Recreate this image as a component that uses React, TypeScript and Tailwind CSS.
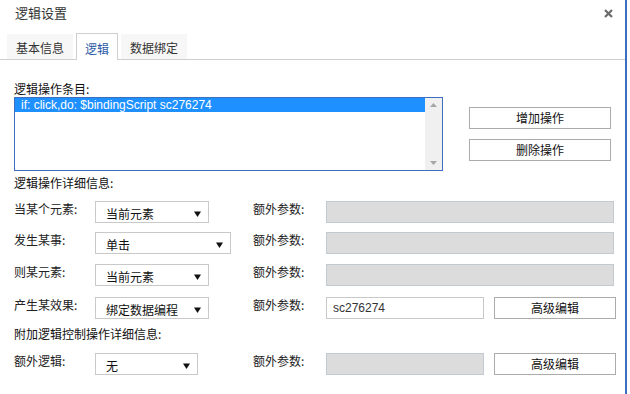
import React from 'react';

const cjk = '"Noto Sans CJK SC", "Liberation Sans", sans-serif';

const Caret: React.FC = () => (
  <svg width="7" height="6" viewBox="0 0 7 6" className="shrink-0">
    <path d="M0 0.5h7L3.5 6z" fill="#111" />
  </svg>
);

const Select: React.FC<{ value: string; width: string }> = ({ value, width }) => (
  <div className={`${width} h-[22px] border border-[#c9c9c9] bg-white flex items-center justify-between pl-[10px] pr-[7px] pt-[3px]`}>
    <span className="text-[12px] leading-[14px] text-[#111]">{value}</span>
    <Caret />
  </div>
);

const Button: React.FC<{ label: string; width: string }> = ({ label, width }) => (
  <div className={`${width} h-[22px] border border-[#ababab] bg-white flex items-center justify-center text-[12px] leading-[14px] text-[#111]`}>
    {label}
  </div>
);

const Row: React.FC<{ label: string; children: React.ReactNode; right: React.ReactNode; className?: string }> = ({ label, children, right, className }) => (
  <div className={`flex items-start h-[22px] ${className ?? ''}`}>
    <div className="w-[81px] pt-[1px] text-[12px] leading-[14px] text-[#222]">{label}</div>
    <div className="w-[158px]">{children}</div>
    <div className="w-[73px] pt-[1px] text-[12px] leading-[14px] text-[#222]">额外参数:</div>
    {right}
  </div>
);

export default function App() {
  return (
    <div className="w-[630px] h-[394px] bg-white overflow-hidden flex" style={{ fontFamily: cjk }}>
      <div className="w-[627px] h-full border-r-2 border-[#3d6fc1] flex flex-col">
        {/* header */}
        <div className="h-[33px] flex items-start justify-between pl-[15px] pr-[15px] pt-[5px]">
          <span className="text-[13px] leading-[15px] text-[#333]">逻辑设置</span>
          <svg width="9" height="9" viewBox="0 0 9 9" className="mt-[4px] mr-[-3px]">
            <path d="M1 1l7 7M8 1l-7 7" stroke="#6b6b6b" strokeWidth="2.2" />
          </svg>
        </div>

        {/* tabs */}
        <div className="h-[27px] flex items-end gap-[3px] pl-[7px] border-b border-[#cfcfcf]">
          <div className="h-[25px] px-[9px] bg-[#f7f7f7] text-[12px] leading-[14px] text-[#333] pt-[7px]">基本信息</div>
          <div className="h-[27px] px-[8px] bg-white border border-b-0 border-[#cfcfcf] mb-[-1px] text-[12px] leading-[14px] text-[#2b5aa5] pt-[8px]">逻辑</div>
          <div className="h-[25px] px-[9px] bg-[#f7f7f7] text-[12px] leading-[14px] text-[#333] pt-[7px]">数据绑定</div>
        </div>

        <div className="pl-[14px]">
          <div className="mt-[22px] text-[12px] leading-[14px] text-[#111]">逻辑操作条目:</div>

          <div className="mt-[1px] flex items-start">
            <div className="w-[429px] h-[74px] border border-[#3d6fc1] flex">
              <div className="flex-1">
                <div className="h-[14px] bg-[#1e90ff] pl-[6px] text-white text-[12px] leading-[14px]" style={{ fontFamily: '"Liberation Sans", Arial, sans-serif' }}>
                  if: click,do: $bindingScript sc276274
                </div>
              </div>
              <div className="w-[17px] h-full bg-[#f0f0f0] flex flex-col items-center justify-between py-[5px]">
                <svg width="7" height="4" viewBox="0 0 7 4"><path d="M0 4h7L3.5 0z" fill="#a6a6a6" /></svg>
                <svg width="7" height="4" viewBox="0 0 7 4"><path d="M0 0h7L3.5 4z" fill="#a6a6a6" /></svg>
              </div>
            </div>
            <div className="ml-[26px] pt-[10px] flex flex-col gap-[10px]">
              <Button label="增加操作" width="w-[142px]" />
              <Button label="删除操作" width="w-[142px]" />
            </div>
          </div>

          <div className="mt-[5px] text-[12px] leading-[14px] text-[#111]">逻辑操作详细信息:</div>

          <Row
            className="mt-[11px]"
            label="当某个元素:"
            right={<div className="w-[288px] h-[22px] bg-[#dcdcdc] border border-[#c3c9d0]" />}
          >
            <Select value="当前元素" width="w-[114px]" />
          </Row>
          <Row
            className="mt-[9px]"
            label="发生某事:"
            right={<div className="w-[288px] h-[22px] bg-[#dcdcdc] border border-[#c3c9d0]" />}
          >
            <Select value="单击" width="w-[136px]" />
          </Row>
          <Row
            className="mt-[10px]"
            label="则某元素:"
            right={<div className="w-[288px] h-[22px] bg-[#dcdcdc] border border-[#c3c9d0]" />}
          >
            <Select value="当前元素" width="w-[114px]" />
          </Row>
          <Row
            className="mt-[11px]"
            label="产生某效果:"
            right={
              <div className="flex gap-[10px]">
                <div className="w-[158px] h-[22px] border border-[#c9c9c9] bg-white pl-[6px] pt-[3px] text-[12px] leading-[14px] text-[#333]" style={{ fontFamily: '"Liberation Sans", Arial, sans-serif' }}>
                  sc276274
                </div>
                <Button label="高级编辑" width="w-[122px]" />
              </div>
            }
          >
            <Select value="绑定数据编程" width="w-[114px]" />
          </Row>

          <div className="mt-[8px] text-[12px] leading-[14px] text-[#111]">附加逻辑控制操作详细信息:</div>

          <Row
            className="mt-[12px]"
            label="额外逻辑:"
            right={
              <div className="flex gap-[10px]">
                <div className="w-[158px] h-[22px] bg-[#dcdcdc] border border-[#c3c9d0]" />
                <Button label="高级编辑" width="w-[122px]" />
              </div>
            }
          >
            <Select value="无" width="w-[103px]" />
          </Row>
        </div>
      </div>
    </div>
  );
}
